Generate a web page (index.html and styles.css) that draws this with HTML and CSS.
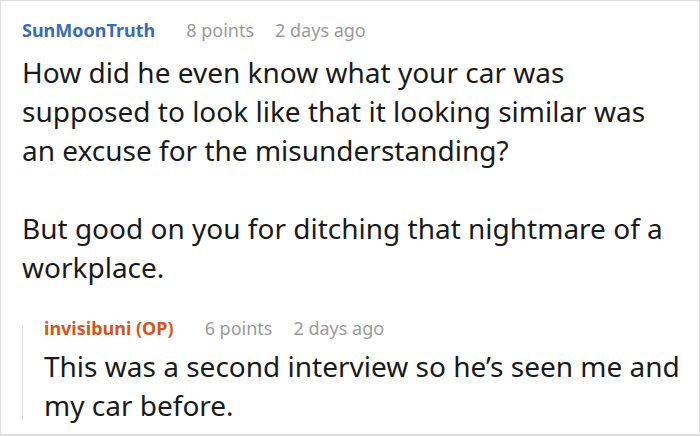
FILE: index.html
```html
<!DOCTYPE html>
<html>
<head>
<meta charset="utf-8">
<link rel="stylesheet" href="styles.css">
</head>
<body>
<div class="card">
  <div class="comment">
    <div class="meta">
      <span class="author">SunMoonTruth</span>
      <span class="info">8 points</span>
      <span class="info">2 days ago</span>
    </div>
    <div class="text main-text">
      <p>How did he even know what your car was supposed to look like that it looking similar was an excuse for the misunderstanding?</p>
      <p>But good on you for ditching that nightmare of a workplace.</p>
    </div>
    <div class="reply">
      <div class="meta">
        <span class="author op">invisibuni (OP)</span>
        <span class="info">6 points</span>
        <span class="info">2 days ago</span>
      </div>
      <div class="text">
        <p>This was a second interview so he’s seen me and my car before.</p>
      </div>
    </div>
  </div>
</div>
</body>
</html>
```

FILE: styles.css
```css
html, body {
  margin: 0;
  padding: 0;
  background: #fff;
}
.card {
  width: 700px;
  height: 436px;
  box-sizing: border-box;
  border: 1px solid #dedede;
  border-bottom-width: 2px;
  padding: 16px 10px 0 21px;
  font-family: "Noto Sans", "Open Sans", sans-serif;
  overflow: hidden;
}
.meta {
  display: flex;
  gap: 21px;
  font-size: 18px;
  line-height: 26px;
  align-items: baseline;
}
.author {
  font-weight: bold;
  color: #3a6bb5;
  margin-right: 10px;
}
.author.op {
  color: #d5541d;
}
.info {
  color: #9a9a9a;
}
.text {
  font-size: 28px;
  line-height: 39px;
  color: #1a1a1a;
}
.text p {
  margin: 0;
}
.text p + p {
  margin-top: 39px;
}
.main-text {
  margin-top: 9.5px;
  padding-right: 20px;
}
.reply {
  position: relative;
  margin-top: 28.5px;
  padding-left: 22px;
}
.reply::before {
  content: "";
  position: absolute;
  left: 0;
  top: 11px;
  bottom: 5px;
  border-left: 1px solid #dcdcdc;
}
.reply .text {
  margin-top: 5.5px;
}
```
